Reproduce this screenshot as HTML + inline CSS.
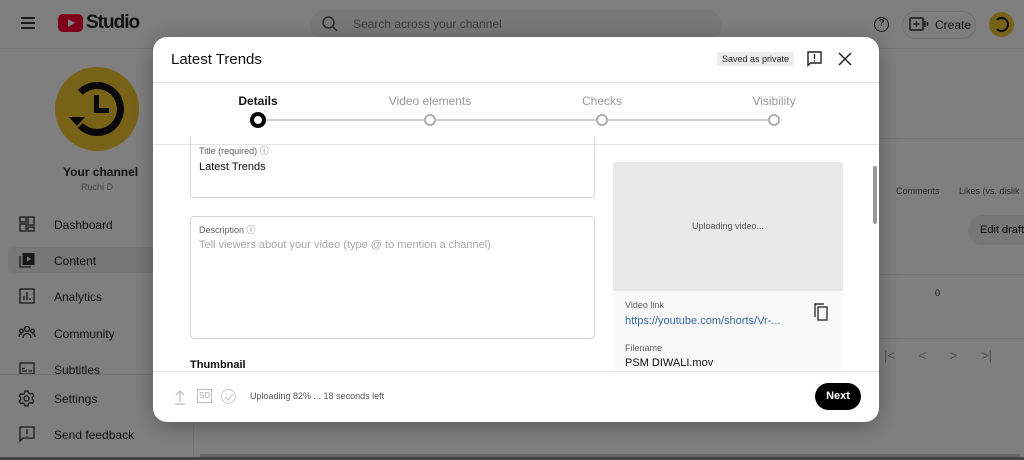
<!DOCTYPE html>
<html style="background:#7f7f7f"><head><meta charset="utf-8"><style>
*{box-sizing:border-box;margin:0;padding:0}
body{width:1024px;height:460px;overflow:hidden;background:#fff;font-family:"Liberation Sans",Arial,sans-serif;position:relative;color:#0d0d0d}
.abs{position:absolute}
.top{left:0;top:0;width:1024px;height:49px;background:#fcfcfc;border-bottom:1px solid #e6e6e6}
.nav{position:absolute;left:54px;font-size:12px;color:#1c1c1c}
.modal{left:153px;top:37px;width:726px;height:385px;background:#fff;border-radius:14px;box-shadow:0 4px 20px rgba(0,0,0,.3);overflow:hidden}
.step{position:absolute;top:57px;font-size:12px;color:#999;transform:translateX(-50%)}
.dot{position:absolute;top:77px;width:12px;height:12px;border:2px solid #b0b0b0;border-radius:50%;background:#fff;transform:translateX(-50%)}
.box{position:absolute;border:1px solid #d6d6d6;border-radius:4px}
.lbl{font-size:9px;color:#606060}
.ov{left:0;top:0;width:1024px;height:460px;background:rgba(0,0,0,.5)}
</style></head><body>
<div class="abs top"></div>
<div class="abs" style="left:21px;top:17px;width:14px;height:2px;background:#333;box-shadow:0 5px 0 #333,0 10px 0 #333"></div>
<div class="abs" style="left:58px;top:14px;width:25px;height:18px;background:#f03;border-radius:5px"></div>
<div class="abs" style="left:68px;top:19px;width:0;height:0;border-left:7px solid #fff;border-top:4px solid transparent;border-bottom:4px solid transparent"></div>
<div class="abs" style="left:86px;top:12px;font-size:19px;font-weight:bold;letter-spacing:-1px;color:#222">Studio</div>
<div class="abs" style="left:310px;top:10px;width:412px;height:30px;background:#f1f1f1;border-radius:15px"></div>
<svg class="abs" style="left:321px;top:15px" width="18" height="18" viewBox="0 0 18 18"><circle cx="7.5" cy="7.5" r="5.5" fill="none" stroke="#555" stroke-width="1.5"/><path d="M11.5 11.5L16 16" stroke="#555" stroke-width="1.5"/></svg>
<div class="abs" style="left:353px;top:17px;font-size:12px;color:#777">Search across your channel</div>
<div class="abs" style="left:874px;top:17px;width:15px;height:15px;border:1.5px solid #333;border-radius:50%;font-size:10px;text-align:center;line-height:12px;font-weight:bold;color:#333">?</div>
<div class="abs" style="left:902px;top:11px;width:74px;height:28px;border:1px solid #e0e0e0;border-radius:14px;font-size:12px;line-height:26px;padding-left:32px;color:#222">Create</div>
<svg class="abs" style="left:909px;top:17px" width="20" height="14" viewBox="0 0 20 14"><rect x="1" y="1" width="13" height="12" rx="1" fill="none" stroke="#333" stroke-width="1.5"/><path d="M7.5 4v6M4.5 7h6M16 4v6M18.5 5v4" stroke="#333" stroke-width="1.5"/></svg>
<div class="abs" style="left:989px;top:12px;width:25px;height:25px;background:#f0c430;border-radius:50%"></div>
<div class="abs" style="left:994px;top:17px;width:15px;height:15px;border:2.5px solid #111;border-left-color:transparent;border-radius:50%"></div>
<div class="abs" style="left:55px;top:67px;width:84px;height:84px;background:#f0c430;border-radius:50%"></div>
<div class="abs" style="left:70px;top:82px;width:54px;height:54px;border:7px solid #111;border-left-color:transparent;border-radius:50%"></div>
<div class="abs" style="left:69px;top:117px;width:0;height:0;border-top:9px solid #111;border-left:8px solid transparent;border-right:8px solid transparent"></div>
<div class="abs" style="left:94px;top:95px;width:5px;height:18px;background:#111"></div>
<div class="abs" style="left:94px;top:108px;width:15px;height:5px;background:#111"></div>
<div class="abs" style="left:63px;top:165px;font-weight:bold;font-size:12px;color:#222">Your channel</div>
<div class="abs" style="left:81px;top:182px;font-size:9px;color:#888">Ruchi D</div>
<div class="abs" style="left:8px;top:247px;width:180px;height:26px;background:#efefef;border-radius:4px"></div>
<div class="nav" style="top:218px">Dashboard</div>
<div class="nav" style="top:254px">Content</div>
<div class="nav" style="top:290px">Analytics</div>
<div class="nav" style="top:327px">Community</div>
<div class="nav" style="top:363px">Subtitles</div>
<div class="nav" style="top:392px">Settings</div>
<div class="nav" style="top:428px">Send feedback</div>
<svg class="abs" style="left:19px;top:216px" width="16" height="16" viewBox="0 0 16 16" fill="none" stroke="#333" stroke-width="1.3"><rect x="1" y="1" width="6" height="5"/><rect x="9" y="1" width="6" height="8"/><rect x="1" y="8" width="6" height="7"/><rect x="9" y="11" width="6" height="4"/></svg>
<svg class="abs" style="left:19px;top:252px" width="16" height="16" viewBox="0 0 16 16"><path d="M1 4v11h11" fill="none" stroke="#333" stroke-width="1.3"/><rect x="3.5" y="1" width="12" height="12" fill="#333"/><path d="M8 4.5v5l4-2.5z" fill="#fff"/></svg>
<svg class="abs" style="left:19px;top:288px" width="16" height="16" viewBox="0 0 16 16" fill="none" stroke="#333" stroke-width="1.3"><rect x="1" y="1" width="14" height="14"/><path d="M5 12V8M8 12V4M11 12v-2"/></svg>
<svg class="abs" style="left:18px;top:325px" width="18" height="14" viewBox="0 0 18 14" fill="none" stroke="#333" stroke-width="1.3"><circle cx="9" cy="4" r="2.5"/><circle cx="3.5" cy="6" r="1.8"/><circle cx="14.5" cy="6" r="1.8"/><path d="M5 13c0-3 2-4.5 4-4.5s4 1.5 4 4.5M1 12c0-2 1-3 2.5-3M17 12c0-2-1-3-2.5-3"/></svg>
<svg class="abs" style="left:19px;top:362px" width="16" height="13" viewBox="0 0 16 13" fill="none" stroke="#333" stroke-width="1.3"><rect x="1" y="1" width="14" height="11"/><path d="M3 9h5M9.5 9h3.5M3 6.5h3"/></svg>
<svg class="abs" style="left:18px;top:390px" width="17" height="17" viewBox="0 0 17 17" fill="none" stroke="#333" stroke-width="1.3"><circle cx="8.5" cy="8.5" r="2.5"/><path d="M7 1h3l.5 2 1.8 1 2-.7 1.5 2.6-1.5 1.4v2l1.5 1.4-1.5 2.6-2-.7-1.8 1L10 16H7l-.5-2-1.8-1-2 .7-1.5-2.6 1.5-1.4v-2L1.2 6.3l1.5-2.6 2 .7 1.8-1z"/></svg>
<svg class="abs" style="left:19px;top:426px" width="16" height="17" viewBox="0 0 16 17" fill="none" stroke="#333" stroke-width="1.3"><path d="M1 1h14v11H4l-3 3z"/><path d="M8 3.5v5M8 9.8v1" /></svg>
<div class="abs" style="left:0;top:374px;width:193px;height:1px;background:#e5e5e5"></div>
<div class="abs" style="left:193px;top:49px;width:1px;height:411px;background:#eee"></div>
<div class="abs" style="left:879px;top:138px;width:145px;height:1px;background:#eee"></div>
<div class="abs" style="left:896px;top:186px;font-size:9px;color:#555">Comments</div>
<div class="abs" style="left:959px;top:186px;font-size:9px;color:#555">Likes (vs. dislik</div>
<div class="abs" style="left:968px;top:215px;width:70px;height:30px;background:#eee;border-radius:15px;font-size:11px;line-height:30px;padding-left:12px;color:#111">Edit draft</div>
<div class="abs" style="left:879px;top:274px;width:145px;height:1px;background:#eee"></div>
<div class="abs" style="left:935px;top:288px;font-size:9px;color:#222">0</div>
<div class="abs" style="left:879px;top:338px;width:145px;height:1px;background:#eee"></div>
<div class="abs" style="left:884px;top:348px;font-size:13px;color:#999;word-spacing:20px">|&lt; &lt; &gt; &gt;|</div>
<div class="abs" style="left:200px;top:454px;width:820px;height:4px;background:#ccc"></div>
<div class="abs ov"></div>
<div class="abs" style="left:0;top:457px;width:1024px;height:3px;background:#444"></div>

<div class="abs modal">
 <div class="abs" style="left:18px;top:14px;font-size:15px;color:#111">Latest Trends</div>
 <div class="abs" style="left:564px;top:15px;padding:2px 5px;background:#ececec;border-radius:2px;font-size:9px;color:#222">Saved as private</div>
 <svg class="abs" style="left:654px;top:14px" width="15" height="16" viewBox="0 0 15 16" fill="none" stroke="#222" stroke-width="1.4"><path d="M1 1h13v11H3.5L1 14.5z"/><path d="M7.5 3v5M7.5 9.3v1.2"/></svg>
 <svg class="abs" style="left:685px;top:15px" width="14" height="14" viewBox="0 0 14 14" stroke="#222" stroke-width="1.5"><path d="M1 1l12 12M13 1L1 13"/></svg>
 <div class="abs" style="left:0;top:45px;width:726px;height:1px;background:#e5e5e5"></div>
 <div class="step" style="left:105px;color:#111;font-weight:bold">Details</div>
 <div class="step" style="left:277px">Video elements</div>
 <div class="step" style="left:449px">Checks</div>
 <div class="step" style="left:621px">Visibility</div>
 <div class="abs" style="left:105px;top:82px;width:516px;height:2px;background:#d0d0d0"></div>
 <div class="dot" style="left:277px"></div><div class="dot" style="left:449px"></div><div class="dot" style="left:621px"></div>
 <div class="dot" style="left:105px;top:75px;width:16px;height:16px;border:4px solid #000"></div>
 <div class="abs" style="left:0;top:107px;width:726px;height:1px;background:#e5e5e5"></div>
 <div class="box" style="left:37px;top:100px;width:405px;height:61px;border-top:none;border-radius:0 0 4px 4px"></div>
 <div class="abs lbl" style="left:46px;top:107px">Title (required) ⓘ</div>
 <div class="abs" style="left:46px;top:124px;font-size:11px">Latest Trends</div>
 <div class="box" style="left:37px;top:179px;width:405px;height:123px"></div>
 <div class="abs lbl" style="left:46px;top:186px">Description ⓘ</div>
 <div class="abs" style="left:46px;top:202px;font-size:11px;color:#a8a8a8">Tell viewers about your video (type @ to mention a channel)</div>
 <div class="abs" style="left:37px;top:322px;font-size:11px;font-weight:bold">Thumbnail</div>
 <div class="abs" style="left:460px;top:125px;width:230px;height:210px;background:#f9f9f9;border-radius:4px 4px 0 0;overflow:hidden">
  <div style="height:129px;background:#e9e9e9;text-align:center;line-height:129px;font-size:9px;color:#555">Uploading video...</div>
  <div class="abs lbl" style="left:12px;top:138px">Video link</div>
  <div class="abs" style="left:12px;top:153px;font-size:11px;color:#3465a4">https://youtube.com/shorts/Vr-...</div>
  <svg class="abs" style="left:200px;top:141px" width="16" height="18" viewBox="0 0 16 18" fill="none" stroke="#333" stroke-width="1.4"><path d="M2 14V1h9"/><rect x="5" y="4" width="9" height="13"/></svg>
  <div class="abs lbl" style="left:12px;top:181px">Filename</div>
  <div class="abs" style="left:12px;top:195px;font-size:11px">PSM DIWALI.mov</div>
 </div>
 <div class="abs" style="left:720px;top:129px;width:4px;height:58px;background:#999;border-radius:2px"></div>
 <div class="abs" style="left:0;top:334px;width:726px;height:1px;background:#e5e5e5"></div>
 <svg class="abs" style="left:21px;top:352px" width="12" height="16" viewBox="0 0 12 16" fill="none" stroke="#bbb" stroke-width="1.2"><path d="M6 13V2M2 6l4-4 4 4M1 15h10"/></svg>
 <div class="abs" style="left:44px;top:352px;width:15px;height:14px;border:1px solid #bbb;font-size:8px;color:#aaa;text-align:center;line-height:12px">SD</div>
 <div class="abs" style="left:68px;top:352px;width:15px;height:15px;border:1px solid #ccc;border-radius:50%"></div>
 <svg class="abs" style="left:71px;top:356px" width="10" height="8" viewBox="0 0 10 8" fill="none" stroke="#ccc" stroke-width="1.2"><path d="M1 4l3 3 5-6"/></svg>
 <div class="abs" style="left:97px;top:354px;font-size:9px;color:#555">Uploading 82% ... 18 seconds left</div>
 <div class="abs" style="left:662px;top:346px;width:46px;height:27px;background:#000;border-radius:14px;color:#fff;font-size:11px;font-weight:bold;text-align:center;line-height:27px">Next</div>
</div>
</body></html>
